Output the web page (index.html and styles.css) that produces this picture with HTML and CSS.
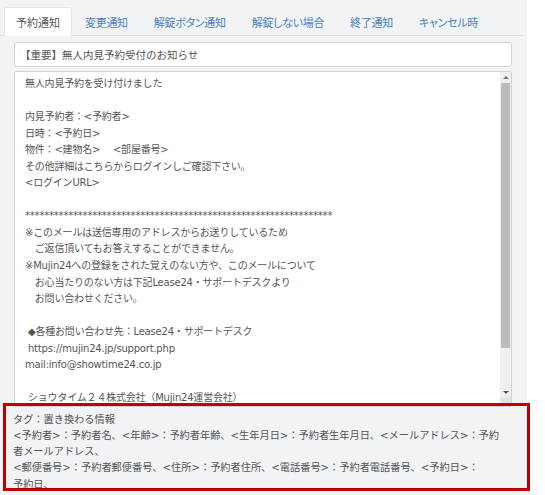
FILE: index.html
```html
<!DOCTYPE html>
<html lang="ja">
<head>
<meta charset="utf-8">
<title>予約通知</title>
<link rel="stylesheet" href="styles.css">
</head>
<body>
<div class="panel">
  <ul class="tabs">
    <li class="tab active">予約通知</li>
    <li class="tab">変更通知</li>
    <li class="tab">解錠ボタン通知</li>
    <li class="tab">解錠しない場合</li>
    <li class="tab">終了通知</li>
    <li class="tab">キャンセル時</li>
  </ul>
  <div class="form">
    <div class="subject">【重要】無人内見予約受付のお知らせ</div>
    <div class="body">
      <div class="body-text">無人内見予約を受け付けました

内見予約者：&lt;予約者&gt;
日時：&lt;予約日&gt;
物件：&lt;建物名&gt;　 &lt;部屋番号&gt;
その他詳細はこちらからログインしご確認下さい。
&lt;ログインURL&gt;

****************************************************************
※このメールは送信専用のアドレスからお送りしているため
　ご返信頂いてもお答えすることができません。
※Mujin24への登録をされた覚えのない方や、このメールについて
　お心当たりのない方は下記Lease24・サポートデスクより
　お問い合わせください。

 ◆各種お問い合わせ先：Lease24・サポートデスク
 https://mujin24.jp/support.php
mail:info@showtime24.co.jp

 ショウタイム２４株式会社（Mujin24運営会社）</div>
      <div class="scrollbar">
        <div class="sb-btn up"></div>
        <div class="sb-track"><div class="sb-thumb"></div></div>
        <div class="sb-btn down"></div>
        <div class="sb-corner"></div>
      </div>
    </div>
    <div class="tags">
      <p>タグ：置き換わる情報</p>
      <p><span class="tok">&lt;予約者&gt;</span>：予約者名、<span class="tok">&lt;年齢&gt;</span>：予約者年齢、<span class="tok">&lt;生年月日&gt;</span>：予約者生年月日、<span class="tok">&lt;メールアドレス&gt;</span>：予約<br>者メールアドレス、</p>
      <p><span class="tok">&lt;郵便番号&gt;</span>：予約者郵便番号、<span class="tok">&lt;住所&gt;</span>：予約者住所、<span class="tok">&lt;電話番号&gt;</span>：予約者電話番号、<span class="tok">&lt;予約日&gt;</span>：<br>予約日、</p>
    </div>
  </div>
  <div class="annotation"></div>
</div>
</body>
</html>
```
FILE: styles.css
```css
html, body {
  margin: 0;
  background: #ffffff;
}

body {
  font-family: "Noto Sans CJK JP", sans-serif;
  color: #555555;
}

.panel {
  position: relative;
  width: 527px;
  height: 495px;
  box-sizing: border-box;
  background: #f2f3f5;
  padding-top: 7px;
}

.tabs {
  display: flex;
  list-style: none;
  margin: 0 4px 0 0;
  padding: 0 0 0 4px;
  border-bottom: 1px solid #dde0e4;
  height: 28px;
}

.tab {
  padding: 0 12px;
  font-size: 11px;
  line-height: 28px;
  color: #4a82c6;
  border: 1px solid transparent;
  border-bottom: none;
  border-radius: 3px 3px 0 0;
  font-feature-settings: "palt";
  letter-spacing: -0.3px;
}

.tab.active {
  background: #ffffff;
  color: #555555;
  border-color: #e2e4e7;
  padding: 0 11px;
  margin-bottom: -1px;
  font-feature-settings: normal;
  letter-spacing: 0;
}

.form {
  padding: 6px 15px 0 14px;
}

.subject {
  height: 25px;
  box-sizing: border-box;
  border: 1px solid #cfd2d6;
  border-radius: 3px;
  background: #ffffff;
  font-size: 10.5px;
  line-height: 23px;
  padding-left: 5px;
}

.body {
  margin-top: 4px;
  height: 336px;
  box-sizing: border-box;
  display: flex;
  border: 1px solid #cfd2d6;
  border-radius: 2px;
  background: #ffffff;
}

.body-text {
  flex: 1;
  overflow: hidden;
  white-space: pre;
  font-family: "DejaVu Sans", "Noto Sans CJK JP", sans-serif;
  font-size: 10px;
  letter-spacing: -0.2px;
  line-height: 16.55px;
  padding: 4px 10px;
}

.scrollbar {
  width: 11px;
  display: flex;
  flex-direction: column;
  background: #efefef;
}

.sb-btn {
  height: 10px;
  display: flex;
  align-items: center;
  justify-content: center;
}

.sb-btn::before {
  content: "";
  border-left: 3px solid transparent;
  border-right: 3px solid transparent;
}

.sb-btn.up::before {
  border-bottom: 3px solid #777777;
}

.sb-btn.down::before {
  border-top: 3px solid #555555;
}

.sb-track {
  flex: 1;
  padding: 1px 1px 0;
}

.sb-thumb {
  height: 265px;
  background: #bcbcbc;
}

.sb-corner {
  height: 9px;
  background: #e4e4e4;
}

.tags {
  margin: 4px 0 0 -1px;
  font-size: 10.2px;
  line-height: 15.7px;
  white-space: nowrap;
}

.tags p {
  margin: 0;
}

.tok {
  font-family: "DejaVu Sans", "Noto Sans CJK JP", sans-serif;
}

.annotation {
  position: absolute;
  left: 3px;
  top: 403px;
  width: 527px;
  height: 88px;
  box-sizing: border-box;
  border: 3px solid #c00000;
}
```
